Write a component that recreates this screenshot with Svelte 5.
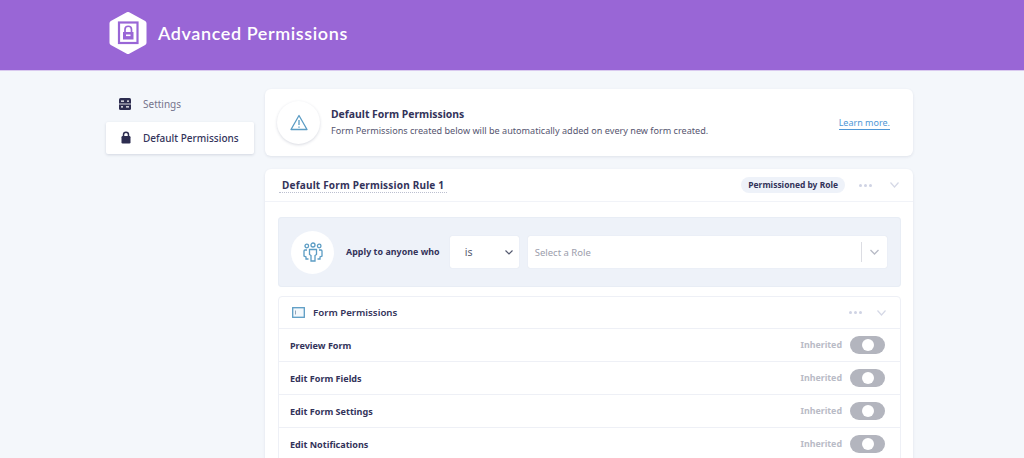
<script>
  const rows = ['Preview Form', 'Edit Form Fields', 'Edit Form Settings', 'Edit Notifications'];
</script>

<div class="page">
  <header class="topbar">
    <svg class="logo" width="42" height="42" viewBox="0 0 42 42">
      <path d="M21 2.500 37 11.200V30.800L21 39.500 5 30.800V11.200z" fill="#fff" stroke="#fff" stroke-width="5" stroke-linejoin="round"/>
      <rect x="12" y="10.500" width="18.500" height="20.500" fill="none" stroke="#9966d6" stroke-width="2.200"/>
      <rect x="16" y="20" width="10.500" height="7.500" fill="#9966d6"/>
      <rect x="19" y="22.500" width="4.500" height="1.600" fill="#fff"/>
      <path d="M18 20v-2.500a3.200 3.200 0 0 1 6.500 0V20" fill="none" stroke="#9966d6" stroke-width="1.700"/>
    </svg>
    <h1>Advanced Permissions</h1>
  </header>

  <div class="layout">
    <nav class="side">
      <div class="nav-item">
        <svg width="14" height="14" viewBox="0 0 14 14">
          <rect width="12" height="12" x="0" y="1" rx="1.500" fill="#2d2d50"/>
          <path d="M0 7h12" stroke="#fff" stroke-width="0.800"/>
          <path d="M2 4.200h3M8 4.200h2M2 9.800h2M7 9.800h3" stroke="#fff" stroke-width="1.300"/>
        </svg>
        <span>Settings</span>
      </div>
      <div class="nav-item active">
        <svg width="14" height="14" viewBox="0 0 14 14">
          <path d="M4.500 6V3.800a2.500 2.500 0 0 1 5 0V6" fill="none" stroke="#2d2d50" stroke-width="1.500"/>
          <rect x="2.500" y="5" width="9" height="7.500" rx="1.200" fill="#2d2d50"/>
        </svg>
        <span>Default Permissions</span>
      </div>
    </nav>

    <main class="main">
      <section class="card notice">
        <div class="circle bordered">
          <svg width="18" height="17" viewBox="0 0 18 17" fill="none" stroke="#5b9cc4" stroke-width="1.300" stroke-linejoin="round">
            <path d="M9 1.500 1 15.500h16z"/>
            <path d="M9 6v5M9 12.500v1.300"/>
          </svg>
        </div>
        <div class="notice-text">
          <h2>Default Form Permissions</h2>
          <p>Form Permissions created below will be automatically added on every new form created.</p>
        </div>
        <span class="learn">Learn more.</span>
      </section>

      <section class="card rule">
        <div class="rule-head">
          <span class="rule-title">Default Form Permission Rule 1</span>
          <span class="pill">Permissioned by Role</span>
          <span class="dots"><i></i><i></i><i></i></span>
          <svg class="chev" width="9" height="6" viewBox="0 0 9 6" fill="none" stroke="#d5d8e6" stroke-width="1.200"><path d="M.5.500 4.500 5 8.500.500"/></svg>
        </div>
        <div class="rule-body">
          <div class="apply">
            <div class="circle white">
              <svg width="20" height="20" viewBox="0 0 20 20" fill="none" stroke="#5b9cc4" stroke-width="1.300">
                <circle cx="10" cy="3" r="2"/>
                <circle cx="3.800" cy="4" r="1.800"/>
                <circle cx="16.200" cy="4" r="1.800"/>
                <path d="M6.500 7.500h7v5l-1.500 1V19H8v-5.500l-1.500-1z"/>
                <path d="M4 8H2a1 1 0 0 0-1 1v5l2 1v2h2.500M16 8h2a1 1 0 0 1 1 1v5l-2 1v2h-2.500"/>
              </svg>
            </div>
            <strong class="apply-label">Apply to anyone who</strong>
            <div class="select is">
              <span>is</span>
              <svg width="8" height="5" viewBox="0 0 8 5" fill="none" stroke="#555a70" stroke-width="1.200"><path d="M.5.500 4 4 7.500.500"/></svg>
            </div>
            <div class="select role">
              <span class="placeholder">Select a Role</span>
              <i class="sep"></i>
              <svg width="9" height="6" viewBox="0 0 9 6" fill="none" stroke="#b8bbc6" stroke-width="1.300"><path d="M.5 1 4.500 5 8.500 1"/></svg>
            </div>
          </div>

          <div class="perm">
            <div class="perm-head">
              <svg width="13" height="11" viewBox="0 0 13 11" fill="none">
                <rect x="0.700" y="0.700" width="11.600" height="9.600" fill="#f3f8fc" stroke="#5b9cc4" stroke-width="1.300"/>
                <path d="M3.500 3.500v4" stroke="#7a8fa8" stroke-width="0.800"/>
              </svg>
              <strong>Form Permissions</strong>
              <span class="dots"><i></i><i></i><i></i></span>
              <svg class="chev" width="9" height="6" viewBox="0 0 9 6" fill="none" stroke="#d5d8e6" stroke-width="1.200"><path d="M.5.500 4.500 5 8.500.500"/></svg>
            </div>
            {#each rows as row}
              <div class="perm-row">
                <strong>{row}</strong>
                <span class="inh">Inherited</span>
                <span class="toggle"><i></i></span>
              </div>
            {/each}
          </div>
        </div>
      </section>
    </main>
  </div>
</div>

<style>
  :global(body) {
    margin: 0;
    background: #f4f7fb;
    overflow: hidden;
  }
  .page {
    height: 458px;
    overflow: hidden;
    font-family: "Noto Sans", "Open Sans", sans-serif;
    color: #33335a;
  }
  .topbar {
    height: 71px;
    box-sizing: border-box;
    background: #9966d6;
    border-bottom: 1px solid #d9c9ef;
    display: flex;
    align-items: center;
    padding: 0 0 4px 107px;
    gap: 9px;
  }
  h1 {
    margin: 0;
    font: 600 18px Lato, sans-serif;
    letter-spacing: 0.6px;
    color: #fff;
  }
  .layout {
    display: flex;
    gap: 11px;
    padding: 18px 111px 0 106px;
  }
  .side {
    width: 148px;
    flex: none;
    margin-top: -1px;
  }
  .nav-item {
    height: 32px;
    display: flex;
    align-items: center;
    gap: 10px;
    padding-left: 13px;
    font-size: 10px;
    color: #74748c;
    box-sizing: border-box;
    margin-bottom: 2px;
  }
  .nav-item.active {
    background: #fff;
    color: #33335a;
    font-weight: 500;
    box-shadow: 0 1px 3px rgba(40, 50, 90, 0.16);
    border-radius: 2px;
  }
  .main {
    width: 648px;
    flex: none;
  }
  .card {
    background: #fff;
    border-radius: 6px;
    box-shadow: 0 1px 3px rgba(40, 50, 90, 0.1);
  }
  .notice {
    height: 67px;
    display: flex;
    align-items: center;
    padding: 0 23px 0 12px;
    margin-bottom: 13px;
  }
  .circle {
    width: 43px;
    height: 43px;
    border-radius: 50%;
    display: flex;
    align-items: center;
    justify-content: center;
    flex: none;
    background: #fff;
  }
  .bordered {
    box-shadow: 0 1px 3px rgba(40, 50, 90, 0.18);
  }
  .notice-text {
    margin-left: 11px;
    flex: 1;
  }
  h2 {
    margin: 0 0 2px;
    font-size: 10.400px;
    line-height: 15px;
    font-weight: 700;
  }
  p {
    margin: 0;
    font-size: 9.100px;
    line-height: 14px;
    color: #55556f;
  }
  .learn {
    font-size: 9px;
    color: #4f97d6;
    border-bottom: 1px solid #4f97d6;
    line-height: 12px;
    margin-top: 1px;
  }
  .rule {
    padding-bottom: 10px;
  }
  .rule-head {
    height: 32px;
    display: flex;
    align-items: center;
    padding: 0 14px 0 14px;
    border-bottom: 1px solid #f1f3f8;
  }
  .rule-title {
    font-size: 10px;
    font-weight: 700;
    letter-spacing: 0.2px;
    border-bottom: 1px dotted #bcc0d0;
    margin-right: auto;
    padding: 0 3px;
    line-height: 14px;
  }
  .pill {
    background: #eef2f9;
    border-radius: 8px;
    padding: 0 7px;
    height: 16px;
    line-height: 16px;
    font-size: 8.450px;
    font-weight: 700;
    color: #33335a;
  }
  .dots {
    display: flex;
    gap: 2px;
    margin: 0 18px 0 14px;
  }
  .dots i {
    width: 3px;
    height: 3px;
    border-radius: 50%;
    background: #cfd3e4;
  }
  .rule-body {
    padding: 15px 12px 0 13px;
  }
  .apply {
    height: 70px;
    box-sizing: border-box;
    background: #eef2f9;
    border-radius: 4px;
    box-shadow: 0 0 0 1px #e8edf5 inset;
    display: flex;
    align-items: center;
    padding: 0 14px 0 13px;
  }
  .apply-label {
    font-size: 8.850px;
    font-weight: 700;
    letter-spacing: 0.05px;
    margin: 0 10px 0 12px;
  }
  .select {
    height: 32px;
    background: #fff;
    border-radius: 2px;
    display: flex;
    align-items: center;
    box-sizing: border-box;
    box-shadow: 0 0 1px rgba(40, 50, 90, 0.15);
  }
  .is {
    width: 69px;
    flex: none;
    padding: 0 6px 0 15px;
    justify-content: space-between;
    font-size: 10.500px;
    color: #555a70;
    margin-right: 9px;
  }
  .role {
    flex: 1;
    padding: 0 8px 0 7px;
  }
  .placeholder {
    font-size: 9.500px;
    color: #9b9dab;
    margin-right: auto;
  }
  .sep {
    width: 1px;
    height: 20px;
    background: #dcdde3;
    margin-right: 8px;
  }
  .perm {
    margin-top: 9px;
    background: #fff;
    border: 1px solid #eef0f6;
    border-radius: 4px;
  }
  .perm-head {
    height: 31px;
    display: flex;
    align-items: center;
    padding: 0 14px 0 13px;
    border-bottom: 1px solid #eef0f6;
  }
  .perm-head .dots {
    margin-right: 15px;
  }
  .perm-head strong {
    margin-left: 8px;
    margin-right: auto;
    font-size: 9.700px;
    font-weight: 600;
    color: #33335a;
  }
  .perm-row {
    height: 33px;
    box-sizing: border-box;
    display: flex;
    align-items: center;
    padding: 0 15px 0 11px;
    border-bottom: 1px solid #eef0f6;
  }
  .perm-row strong {
    font-size: 9.050px;
    font-weight: 700;
    color: #33335a;
    margin-right: auto;
  }
  .inh {
    font-size: 8.850px;
    font-weight: 700;
    color: #b9bbc6;
    margin-right: 8px;
  }
  .toggle {
    width: 35px;
    height: 18px;
    border-radius: 9px;
    background: #b3b5be;
    display: flex;
    align-items: center;
    justify-content: center;
  }
  .toggle i {
    width: 12px;
    height: 12px;
    border-radius: 50%;
    background: #fff;
  }
</style>
